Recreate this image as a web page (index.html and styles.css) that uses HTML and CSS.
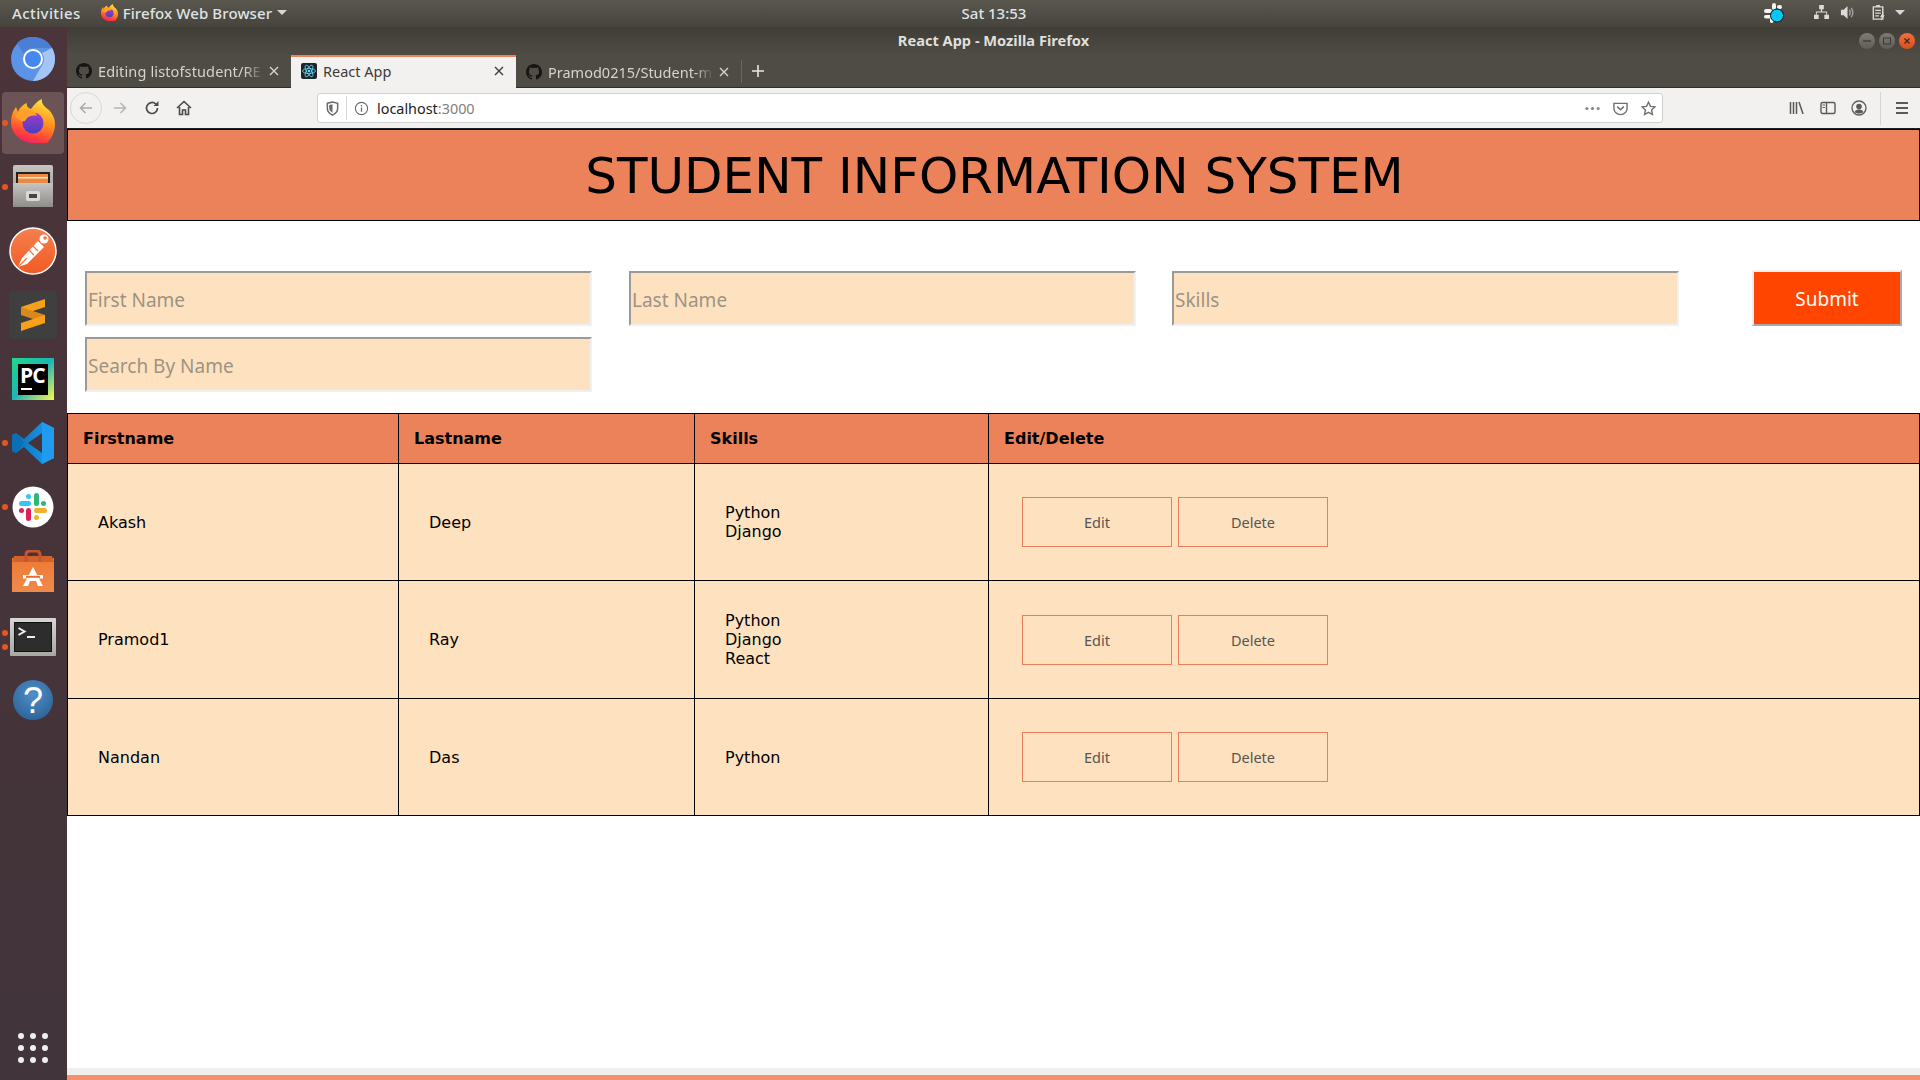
FILE: index.html
```html
<!DOCTYPE html>
<html lang="en">
<head>
<meta charset="utf-8">
<title>React App</title>
<link rel="stylesheet" href="styles.css">
</head>
<body>
<svg class="defs" width="0" height="0" aria-hidden="true">
  <defs>
    <symbol id="gh" viewBox="0 0 16 16"><path fill="#161514" d="M8 0C3.6 0 0 3.6 0 8c0 3.5 2.3 6.5 5.5 7.6.4.1.5-.2.5-.4v-1.400c-2.200.5-2.700-1-2.700-1-.4-.9-.9-1.200-.9-1.200-.7-.5.1-.5.1-.5.8.1 1.200.8 1.200.8.7 1.200 1.900.9 2.300.7.1-.5.3-.9.5-1.100-1.800-.2-3.600-.9-3.600-4 0-.9.3-1.600.8-2.100-.1-.2-.4-1 .1-2.100 0 0 .7-.2 2.200.8.600-.2 1.300-.3 2-.3s1.400.1 2 .3c1.500-1 2.200-.8 2.200-.8.4 1.100.2 1.900.1 2.100.5.6.8 1.300.8 2.100 0 3.100-1.900 3.700-3.700 3.900.3.3.6.8.6 1.500v2.200c0 .2.1.5.6.4C13.700 14.500 16 11.500 16 8c0-4.400-3.600-8-8-8z"/></symbol>
    <symbol id="x" viewBox="0 0 12 12"><path d="M2 2l8 8M10 2l-8 8" fill="none" stroke="currentColor" stroke-width="1.400"/></symbol>
    <linearGradient id="ff" x1=".7" y1="0" x2=".4" y2="1"><stop offset="0" stop-color="#ffe63a"/><stop offset=".45" stop-color="#ff8f1f"/><stop offset=".75" stop-color="#ff3d3d"/><stop offset="1" stop-color="#e5127e"/></linearGradient>
    <linearGradient id="ffp" x1="0" y1="0" x2="0" y2="1"><stop offset="0" stop-color="#a03cc8"/><stop offset="1" stop-color="#4a3fc0"/></linearGradient>
    <linearGradient id="pm" x1="0" y1="0" x2="0" y2="1"><stop offset="0" stop-color="#f4804f"/><stop offset="1" stop-color="#f25a22"/></linearGradient>
    <linearGradient id="vs" x1="0" y1="0" x2="1" y2="0"><stop offset="0" stop-color="#0a6fb5"/><stop offset="1" stop-color="#1f9cf0"/></linearGradient>
    <linearGradient id="pc" x1="0" y1="0" x2="1" y2="1"><stop offset="0" stop-color="#21d789"/><stop offset=".5" stop-color="#1db4b8"/><stop offset="1" stop-color="#fcf84a"/></linearGradient>
    <linearGradient id="as" x1="0" y1="0" x2="0" y2="1"><stop offset="0" stop-color="#ee7a33"/><stop offset="1" stop-color="#ef8a4c"/></linearGradient>
    <linearGradient id="cab" x1="0" y1="0" x2="0" y2="1"><stop offset="0" stop-color="#c6c4c0"/><stop offset="1" stop-color="#8f8d89"/></linearGradient>
    <linearGradient id="term" x1="0" y1="0" x2="0" y2="1"><stop offset="0" stop-color="#d8d6d2"/><stop offset="1" stop-color="#a9a7a3"/></linearGradient>
    <radialGradient id="hp" cx=".5" cy=".35" r=".7"><stop offset="0" stop-color="#4f8fc9"/><stop offset="1" stop-color="#2c6296"/></radialGradient>
    <symbol id="ffx" viewBox="0 0 44 44">
      <path d="M22 44C10 44 0 34.500 0 23 0 17 2 11.500 5 8l2 5c1-3 4-7 9-9-1 3 1 5 4 6 3-4 6-8 11-10-1 5 3 8 7 11 4 4 6 9 6 14 0 12-9 25-22 25z" fill="url(#ff)"/>
      <circle cx="22" cy="24" r="10.500" fill="url(#ffp)"/>
      <path d="M4 17c3-5 9-8 15-6 4 1 7 4 7 6-3-1-8 0-10 2l-2 3c-3 1-7-1-10-5z" fill="#ffa02a"/>
    </symbol>
  </defs>
</svg>

<header class="topbar">
  <span class="activities">Activities</span>
  <span class="appmenu">
    <svg class="appmenu-ico"><use href="#ffx"/></svg>
    <span>Firefox Web Browser</span><i class="caret"></i>
  </span>
  <span class="clock">Sat 13:53</span>
  <span class="tray">
    <svg class="tray-slack" viewBox="0 0 22 22"><g fill="#f4f4f2"><rect x="9" y="1" width="4" height="7" rx="2"/><rect x="1" y="7" width="8" height="4" rx="2"/><rect x="1" y="13" width="8" height="3.500" rx="1.700"/><rect x="7" y="15" width="3.500" height="6" rx="1.700"/><rect x="14" y="3" width="5" height="4" rx="2"/></g><circle cx="14" cy="13.500" r="6.500" fill="#00c8f8" stroke="#111" stroke-width="1"/></svg>
    <svg class="tray-net" viewBox="0 0 16 16"><path fill="#dcdbd7" d="M5.500 0h5v4.500H8.700V7H14v3.500h2V15h-5v-4.500h2V8H3v2.500h2V15H0v-4.500h2V7h5.300V4.500H5.500z"/></svg>
    <svg class="tray-vol" viewBox="0 0 16 16"><path fill="#dcdbd7" d="M1 5h3l4-4v14l-4-4H1z"/><path d="M10 5c1 1.800 1 4.200 0 6M12 3c2 3 2 7 0 10" fill="none" stroke="#a5a39e" stroke-width="1.500"/></svg>
    <svg class="tray-bat" viewBox="0 0 14 18"><path fill="none" stroke="#dcdbd7" stroke-width="1.500" d="M1 3h10v13H1z"/><path fill="#dcdbd7" d="M4 1h4v2H4zM3 6h6v1.300H3zM3 9h6v1.300H3zM3 12h4v1.300H3z"/><path fill="#dcdbd7" d="M11 9l-3 5h2l-1 4 4-6h-2l1-3z"/></svg>
    <i class="caret"></i>
  </span>
</header>

<div class="desk">
  <nav class="dock">
    <div class="dock-item">
      <svg class="ico44" viewBox="0 0 44 44"><circle cx="22" cy="22" r="22" fill="#5b93e6"/><path d="M22 0a22 22 0 0 1 19 11H22a11 11 0 0 0-9.500 5.500L6 6A22 22 0 0 1 22 0z" fill="#4a7fd6"/><path d="M41 11a22 22 0 0 1-19 33l9.500-16.500A11 11 0 0 0 33 22a11 11 0 0 0-2-6z" fill="#a6c5f7"/><circle cx="22" cy="22" r="10" fill="#fff"/><circle cx="22" cy="22" r="8" fill="#4688f1"/></svg>
    </div>
    <div class="dock-item active">
      <i class="run"></i>
      <svg class="ico44 ico-fox"><use href="#ffx"/></svg>
    </div>
    <div class="dock-item">
      <i class="run"></i>
      <svg class="ico44" viewBox="0 0 44 44"><rect x="2" y="0" width="40" height="42" rx="2" fill="url(#cab)"/><rect x="5" y="7" width="34" height="11" fill="#222"/><rect x="7" y="9" width="30" height="9" fill="#e98a45"/><rect x="7" y="12" width="30" height="1.500" fill="#f5e4c8"/><rect x="2" y="18" width="40" height="24" fill="url(#cab)"/><rect x="15" y="26" width="14" height="10" rx="2" fill="#dad8d4"/><rect x="18" y="29" width="8" height="4" fill="#444"/></svg>
    </div>
    <div class="dock-item">
      <svg class="ico48" viewBox="0 0 48 48"><circle cx="24" cy="24" r="23" fill="url(#pm)" stroke="#fff" stroke-width="1.500"/><path d="M9 40l4-9 16-17 6 6-17 17z" fill="#fff"/><path d="M9 40l9-9M19 22l6 6M23 18l6 6" stroke="#f4743f" stroke-width="1.200"/><circle cx="35" cy="12" r="4.500" fill="#fff"/><circle cx="36" cy="11" r="1.800" fill="#f4743f"/></svg>
    </div>
    <div class="dock-item">
      <svg class="ico48" viewBox="0 0 48 48"><rect width="48" height="48" rx="3" fill="#3f3f3f"/><path d="M36 8L12 16v8l24-8z" fill="#f9a01b"/><path d="M12 16l24 8v8L12 24z" fill="#d98a1c"/><path d="M36 24v8l-24 8v-8z" fill="#f9a01b"/></svg>
    </div>
    <div class="dock-item">
      <svg class="ico42" viewBox="0 0 42 42"><rect width="42" height="42" fill="url(#pc)"/><rect x="6" y="6" width="30" height="31" fill="#000"/><text class="pc-text" x="8" y="24.500">PC</text><rect x="9" y="30" width="11" height="2" fill="#fff"/></svg>
    </div>
    <div class="dock-item">
      <i class="run"></i>
      <svg class="ico42" viewBox="0 0 42 42"><path d="M30 0l12 6v30l-12 6-18-17-8 6-4-2V13l4-2 8 6z" fill="url(#vs)"/><path d="M30 11L16 21l14 10z" fill="#473439"/><path d="M30 0l12 6v30l-12 6z" fill="#1f9cf0"/><path d="M4 11L0 13v16l4 2 8-10z" fill="#0a6fb5"/></svg>
    </div>
    <div class="dock-item">
      <i class="run"></i>
      <svg class="ico42" viewBox="0 0 42 42"><circle cx="21" cy="21" r="20.500" fill="#fff"/><g fill="#36c5f0"><rect x="7" y="15" width="12" height="5" rx="2.500"/><rect x="14" y="8" width="5" height="5" rx="2.500"/></g><g fill="#2eb67d"><rect x="22" y="7" width="5" height="13" rx="2.500"/><rect x="29" y="15" width="5" height="5" rx="2.500"/></g><g fill="#ecb22e"><rect x="22" y="22" width="13" height="5" rx="2.500"/><rect x="22" y="29" width="5" height="5" rx="2.500"/></g><g fill="#e01e5a"><rect x="14" y="22" width="5" height="13" rx="2.500"/><rect x="7" y="22" width="5" height="5" rx="2.500"/></g></svg>
    </div>
    <div class="dock-item">
      <svg class="ico-store" viewBox="0 0 42 44"><rect y="8" width="42" height="34" fill="url(#as)"/><path d="M2 6h38l2 6H0z" fill="#d2622c"/><path d="M14 12V5q0-4 4-4h6q4 0 4 4v7" fill="none" stroke="#c5552a" stroke-width="3"/><path d="M21 17l-10 19h5l2-5h6l2 5h5z" fill="#fff"/><rect x="11" y="25" width="20" height="3.500" fill="#fff"/><rect x="14" y="25.800" width="14" height="2" fill="#ec6d30"/></svg>
    </div>
    <div class="dock-item">
      <i class="run run-a"></i><i class="run run-b"></i>
      <svg class="ico-term" viewBox="0 0 46 38"><rect width="46" height="38" rx="1" fill="url(#term)"/><rect x="4" y="4" width="38" height="30" fill="#111"/><rect x="5" y="5" width="36" height="28" fill="#2d2d2d"/><path d="M8.500 10l6 3.500-6 3.500" fill="none" stroke="#eee" stroke-width="2"/><rect x="17" y="18" width="8" height="2" fill="#eee"/></svg>
    </div>
    <div class="dock-item">
      <svg class="ico-help" viewBox="0 0 42 42"><circle cx="21" cy="21" r="20" fill="url(#hp)"/><text class="help-text" x="21" y="34">?</text></svg>
    </div>
    <div class="dock-grid">
      <i></i><i></i><i></i><i></i><i></i><i></i><i></i><i></i><i></i>
    </div>
  </nav>

  <main class="window">
    <div class="titlebar">
      <span class="win-title">React App - Mozilla Firefox</span>
      <span class="win-btns">
        <i class="wb"><svg viewBox="0 0 16 16"><path d="M4 8h8" stroke="#3a3a36" stroke-width="1.300"/></svg></i>
        <i class="wb"><svg viewBox="0 0 16 16"><rect x="4.500" y="5" width="7" height="6" fill="none" stroke="#3a3a36"/></svg></i>
        <i class="wb wb-close"><svg viewBox="0 0 16 16"><path d="M5.500 5.500l5 5M10.500 5.500l-5 5" stroke="#3a2a20" stroke-width="1.300"/></svg></i>
      </span>
    </div>

    <div class="tabbar">
      <div class="tab tab-a">
        <svg class="fav"><use href="#gh"/></svg>
        <span class="tab-label">Editing listofstudent/RE</span>
        <svg class="tab-x"><use href="#x"/></svg>
      </div>
      <div class="tab tab-active">
        <svg class="fav" viewBox="0 0 16 16"><rect width="16" height="16" rx="2" fill="#20232a"/><g fill="none" stroke="#61dafb" stroke-width=".8"><ellipse cx="8" cy="8" rx="6.500" ry="2.500"/><ellipse cx="8" cy="8" rx="6.500" ry="2.500" transform="rotate(60 8 8)"/><ellipse cx="8" cy="8" rx="6.500" ry="2.500" transform="rotate(120 8 8)"/></g><circle cx="8" cy="8" r="1.300" fill="#61dafb"/></svg>
        <span class="tab-label">React App</span>
        <svg class="tab-x"><use href="#x"/></svg>
      </div>
      <div class="tab tab-c">
        <svg class="fav"><use href="#gh"/></svg>
        <span class="tab-label">Pramod0215/Student-m</span>
        <svg class="tab-x"><use href="#x"/></svg>
      </div>
      <svg class="tab-new" viewBox="0 0 14 14"><path d="M7 1v12M1 7h12" stroke="#e8e7e4" stroke-width="1.600"/></svg>
    </div>

    <div class="toolbar">
      <span class="back"><svg viewBox="0 0 16 16"><path d="M14 8H3M7.500 3L2.500 8l5 5" fill="none" stroke="#a9a9a7" stroke-width="1.500"/></svg></span>
      <svg class="tb-ico tb-fwd" viewBox="0 0 16 16"><path d="M2 8h11M8.500 3l5 5-5 5" fill="none" stroke="#b4b4b2" stroke-width="1.500"/></svg>
      <svg class="tb-ico tb-reload" viewBox="0 0 16 16"><path d="M13.500 8a5.500 5.500 0 1 1-1.700-4" fill="none" stroke="#4a4a48" stroke-width="1.700"/><path d="M14.500 1v5h-5z" fill="#4a4a48"/></svg>
      <svg class="tb-ico tb-home" viewBox="0 0 16 16"><path d="M1 8l7-6.500L15 8M3.500 7v7.500h3V10h3v4.500h3V7" fill="none" stroke="#4a4a48" stroke-width="1.600"/></svg>
      <div class="urlbar">
        <svg class="url-ico url-shield" viewBox="0 0 16 16"><path d="M2.500 2.500L8 1l5.500 1.500V8c0 3-2.500 5.500-5.500 7-3-1.500-5.500-4-5.500-7z" fill="none" stroke="#6a6a68" stroke-width="1.600"/><path d="M8 3.500v9c-2-1-3.500-3-3.500-5V4.300z" fill="#6a6a68"/></svg>
        <i class="url-sep"></i>
        <svg class="url-ico url-info" viewBox="0 0 16 16"><circle cx="8" cy="8" r="6.500" fill="none" stroke="#6a6a68" stroke-width="1.200"/><path d="M7.300 7h1.400v4.500H7.300zM7.300 4.200h1.400v1.500H7.300z" fill="#6a6a68"/></svg>
        <span class="url-text">localhost<span class="url-port">:3000</span></span>
        <svg class="url-ico url-dots" viewBox="0 0 16 16"><g fill="#8a8a88"><circle cx="2" cy="8" r="1.700"/><circle cx="8" cy="8" r="1.700"/><circle cx="14" cy="8" r="1.700"/></g></svg>
        <svg class="url-ico url-pocket" viewBox="0 0 16 16"><path d="M1 2.500h14V8a7 6.500 0 0 1-14 0z" fill="none" stroke="#6f6f6d" stroke-width="1.500"/><path d="M4.500 6l3.500 3.300L11.500 6" fill="none" stroke="#6f6f6d" stroke-width="1.700"/></svg>
        <svg class="url-ico url-star" viewBox="0 0 16 16"><path d="M8 1.300l2.100 4.400 4.700.6-3.500 3.300.9 4.800L8 12.100l-4.200 2.300.9-4.800L1.200 6.300l4.700-.6z" fill="none" stroke="#6f6f6d" stroke-width="1.500"/></svg>
      </div>
      <div class="tb-right">
        <svg class="tb-ico" viewBox="0 0 16 16"><path d="M1.500 2v12M4.500 2v12M7.500 2v12M10 2l4 12" fill="none" stroke="#5a5a58" stroke-width="1.500"/></svg>
        <svg class="tb-ico" viewBox="0 0 16 16"><rect x="1" y="2.500" width="14" height="11" rx="1.500" fill="none" stroke="#5a5a58" stroke-width="1.400"/><path d="M6.500 2.500v11" stroke="#5a5a58" stroke-width="1.400"/><path d="M2.500 5h2.500M2.500 7.500h2.500" stroke="#5a5a58"/></svg>
        <svg class="tb-ico" viewBox="0 0 16 16"><circle cx="8" cy="8" r="7" fill="none" stroke="#5a5a58" stroke-width="1.300"/><circle cx="8" cy="6.500" r="2.800" fill="#5a5a58"/><path d="M3.500 12c1-2 3-2.500 4.500-2.500s3.500.5 4.500 2.500c-2.500 2-6.500 2-9 0z" fill="#5a5a58"/></svg>
        <i class="tb-sep"></i>
        <svg class="tb-ico" viewBox="0 0 16 16"><path d="M2 3h12M2 8h12M2 13h12" stroke="#5a5a58" stroke-width="1.800"/></svg>
      </div>
    </div>

    <div class="page">
      <h1 class="app-title">STUDENT INFORMATION SYSTEM</h1>
      <form class="entry">
        <div class="entry-row">
          <input class="field" placeholder="First Name">
          <input class="field field-2" placeholder="Last Name">
          <input class="field field-3" placeholder="Skills">
          <button class="submit" type="button">Submit</button>
        </div>
        <div class="entry-row">
          <input class="field" placeholder="Search By Name">
        </div>
      </form>
      <table class="students">
        <colgroup><col class="c1"><col class="c2"><col class="c3"><col class="c4"></colgroup>
        <thead>
          <tr><th>Firstname</th><th>Lastname</th><th>Skills</th><th>Edit/Delete</th></tr>
        </thead>
        <tbody>
          <tr>
            <td>Akash</td><td>Deep</td>
            <td>Python<br>Django</td>
            <td class="acts"><button class="act" type="button">Edit</button><button class="act" type="button">Delete</button></td>
          </tr>
          <tr>
            <td>Pramod1</td><td>Ray</td>
            <td>Python<br>Django<br>React</td>
            <td class="acts"><button class="act" type="button">Edit</button><button class="act" type="button">Delete</button></td>
          </tr>
          <tr>
            <td>Nandan</td><td>Das</td>
            <td>Python</td>
            <td class="acts"><button class="act" type="button">Edit</button><button class="act" type="button">Delete</button></td>
          </tr>
        </tbody>
      </table>
      <div class="foot"><div class="foot-bar"></div></div>
    </div>
  </main>
</div>
</body>
</html>
```
FILE: styles.css
```css
* { box-sizing: border-box; }
html, body { margin: 0; height: 100%; overflow: hidden; }
body { width: 1920px; height: 1080px; display: flex; flex-direction: column; background: #fff; font-family: "Noto Sans", sans-serif; }
.defs { position: absolute; }

/* gnome top bar */
.topbar { height: 27px; flex: none; position: relative; display: flex; align-items: center; padding-bottom: 2px; background: linear-gradient(#5a574f, #46443d); color: #dfe3e6; font-size: 15px; font-weight: 500; }
.activities { margin-left: 12px; letter-spacing: .4px; }
.appmenu { margin-left: 20px; display: flex; align-items: center; letter-spacing: .1px; }
.appmenu-ico { width: 17px; height: 17px; margin-right: 5px; }
.caret { display: inline-block; width: 0; height: 0; border: 5px solid transparent; border-top: 5px solid #d8d7d3; border-bottom: 0; margin-left: 5px; }
.clock { position: absolute; left: 0; right: 0; text-align: center; padding-left: 68px; }
.tray { margin-left: auto; display: flex; align-items: center; }
.tray-slack { width: 22px; height: 22px; }
.tray-net { width: 15px; height: 15px; margin-left: 29px; }
.tray-vol { width: 15px; height: 15px; margin-left: 11px; }
.tray-bat { width: 14px; height: 17px; margin-left: 17px; }
.tray .caret { margin-left: 9px; margin-right: 15px; }

.desk { flex: 1; display: flex; min-height: 0; }

/* dock */
.dock { width: 67px; flex: none; display: flex; flex-direction: column; align-items: center; padding-right: 1px; background: linear-gradient(#4b343a, #41343a); }
.dock-item { width: 62px; height: 64px; flex: none; display: flex; align-items: center; justify-content: center; position: relative; border-radius: 4px; }
.dock-item.active { height: 62px; margin: 1px 0; background: #6b5356; }
.run { position: absolute; left: 0; top: 50%; width: 6px; height: 6px; margin-top: -3px; border-radius: 50%; background: #e95420; }
.run-a { margin-top: -5px; }
.run-b { margin-top: 9px; }
.ico44 { width: 44px; height: 44px; }
.ico-fox { margin-bottom: 4px; }
.ico48 { width: 48px; height: 48px; }
.ico42 { width: 42px; height: 42px; }
.ico-store { width: 42px; height: 44px; margin-top: 2px; }
.ico-term { width: 46px; height: 38px; margin-top: 3px; }
.ico-help { width: 42px; height: 42px; margin-top: 2px; }
.pc-text { font-family: "Open Sans", sans-serif; font-weight: 700; font-size: 21px; letter-spacing: -1px; fill: #fff; }
.help-text { font-family: "Liberation Sans", sans-serif; font-weight: 400; font-size: 36px; fill: #fff; text-anchor: middle; }
.dock-grid { margin-top: auto; margin-bottom: 17px; display: grid; grid-template-columns: repeat(3, 6px); gap: 6px; }
.dock-grid i { width: 6px; height: 6px; border-radius: 50%; background: #efefed; }

/* window chrome */
.window { flex: 1; min-width: 0; display: flex; flex-direction: column; }
.titlebar { height: 28px; flex: none; position: relative; display: flex; align-items: center; justify-content: center; padding-bottom: 2px; background: linear-gradient(#3f3d37, #4f4c45); color: #dfdfdb; }
.win-title { font-size: 14.600px; font-weight: 700; }
.win-btns { position: absolute; right: 5px; top: 6px; display: flex; gap: 4px; }
.wb { width: 16px; height: 16px; border-radius: 50%; background: linear-gradient(#7d7b74, #5f5d57); display: block; }
.wb svg { display: block; width: 16px; height: 16px; }
.wb-close { background: linear-gradient(#f0703c, #d94f1c); }
.tabbar { height: 33px; flex: none; display: flex; align-items: stretch; background: #4f4c45; border-bottom: 1px solid #2e2d29; }
.tab { display: flex; align-items: center; color: #d4d3cf; font-size: 14.500px; }
.tab-a { width: 224px; padding: 0 11px 0 9px; }
.tab-a .tab-label { letter-spacing: .13px; }
.tab-active { width: 225px; margin-bottom: -1px; padding: 0 11px 3px 10px; background: #f2f1ef; border-top: 2px solid #ec835a; color: #3c3c3c; }
.tab-c { width: 226px; padding: 0 11px 0 10px; border-right: 1px solid #6a675f; margin: 5px 0 4px; }
.fav { width: 16px; height: 16px; flex: none; margin-right: 6px; }
.tab-label { flex: 1; min-width: 0; white-space: nowrap; overflow: hidden; -webkit-mask-image: linear-gradient(to right, #000 88%, transparent); mask-image: linear-gradient(to right, #000 88%, transparent); }
.tab-active .tab-label { -webkit-mask-image: none; mask-image: none; }
.tab-x { width: 12px; height: 12px; flex: none; margin-left: 4px; }
.tab-new { width: 14px; height: 14px; align-self: center; margin-left: 9px; }

.toolbar { height: 41px; flex: none; display: flex; align-items: center; background: #f2f1ef; border-bottom: 1px solid #1f1f1f; padding-left: 3px; }
.back { width: 32px; height: 32px; flex: none; border: 1px solid #d8d8d6; border-radius: 50%; display: flex; align-items: center; justify-content: center; }
.back svg { width: 16px; height: 16px; }
.tb-ico { width: 16px; height: 16px; flex: none; }
.tb-fwd { margin-left: 10px; }
.tb-reload { margin-left: 16px; }
.tb-home { margin-left: 16px; }
.urlbar { width: 1346px; height: 30px; flex: none; margin-left: 125px; display: flex; align-items: center; background: #fff; border: 1px solid #d0d0ce; border-radius: 3px; }
.url-ico { width: 15px; height: 15px; flex: none; }
.url-shield { margin-left: 7px; }
.url-sep { width: 1px; height: 24px; background: #d6d6d4; margin-left: 6px; }
.url-info { margin-left: 7px; }
.url-text { margin-left: 8px; font-size: 14.400px; color: #222; flex: 1; }
.url-port { color: #808080; }
.url-dots { margin-right: 13px; }
.url-pocket { margin-right: 13px; }
.url-star { margin-right: 6px; }
.tb-right { margin-left: 126px; display: flex; align-items: center; gap: 15px; }
.tb-sep { width: 1px; height: 33px; background: #d4d4d2; margin: 0 -2px; }

/* page */
.page { flex: 1; min-height: 0; display: flex; flex-direction: column; background: #fff; color: #000; }
.app-title { margin: 0; height: 92px; flex: none; display: flex; align-items: center; justify-content: center; padding: 2px 0 0 2px; background: #eb825a; border: 1px solid #000; font-family: "DejaVu Sans", sans-serif; font-size: 50px; font-weight: 400; }
.entry { height: 192px; flex: none; padding: 50px 0 0 18px; display: flex; flex-direction: column; gap: 11px; }
.entry-row { display: flex; align-items: flex-start; }
.field { width: 507px; height: 55px; padding: 2px 1px 0; background: #fee2c0; font-family: "Noto Sans", sans-serif; font-size: 19px; color: #000; border: 2px solid; border-color: #9a9a9a #f0f0f0 #f0f0f0 #9a9a9a; }
.field::placeholder { color: #9d9384; opacity: 1; }
.field-2 { margin-left: 37px; }
.field-3 { margin-left: 36px; }
.submit { width: 150px; height: 56px; margin: -1px 0 0 73px; padding-top: 3px; background: #ff4500; color: #fff; font-family: "Noto Sans", sans-serif; font-size: 19px; border: 2px solid; border-color: #f0f0f0 #a9a9a9 #a9a9a9 #f0f0f0; }

.students { width: 1853px; flex: none; border-collapse: collapse; table-layout: fixed; font-family: "DejaVu Sans", sans-serif; font-size: 16px; line-height: 19px; }
.c1 { width: 331px; }
.c2 { width: 296px; }
.c3 { width: 294px; }
.students th, .students td { border: 1px solid #000; text-align: left; }
.students th { height: 50px; padding: 0 15px; background: #eb825a; font-weight: 700; }
.students td { height: 117px; padding: 0 30px; background: #fee2c0; }
.students td.acts { padding: 0 33px; }
.students tbody tr:nth-child(2) td { height: 118px; }
.act { width: 150px; height: 50px; margin-right: 6px; padding: 0; background: transparent; border: 1px solid #ea7d5a; color: #555; font-family: "Noto Sans", sans-serif; font-size: 14.500px; vertical-align: middle; }
.foot { margin-top: auto; height: 12px; flex: none; background: #f0efed; padding-top: 7px; }
.foot-bar { height: 5px; background: #f4916a; }
```
